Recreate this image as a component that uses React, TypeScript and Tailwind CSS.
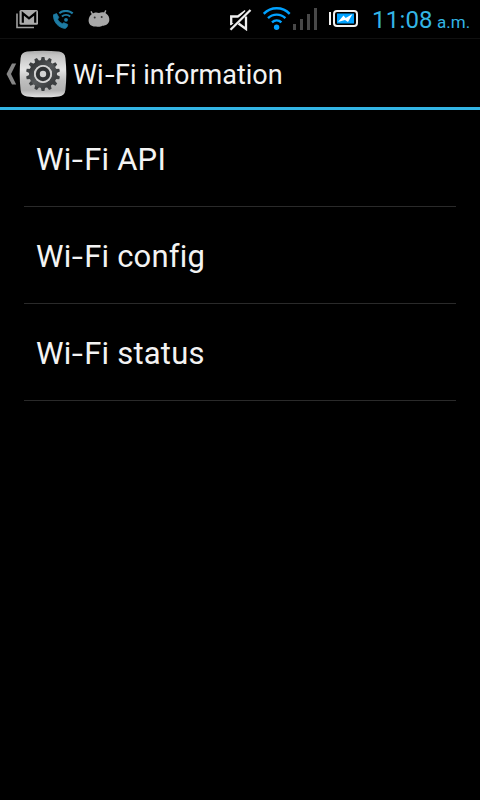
const entries = ["Wi-Fi API", "Wi-Fi config", "Wi-Fi status"];

const teeth = Array.from({ length: 14 }, (_, i) => (i * 360) / 14);

function MailIcon() {
  return (
    <svg width="22" height="19" viewBox="0 0 22 19" className="shrink-0">
      <path d="M1 3.5V17.5H18" fill="none" stroke="#a0a0a0" strokeWidth="1.6" />
      <rect x="3.5" y="0" width="18.5" height="14.8" rx="1.5" fill="#ababab" />
      <path d="M6.8 12.8V3.4L13 8.4l6.2-5v9.4" fill="none" stroke="#000" strokeWidth="2.2" />
    </svg>
  );
}

function WifiCallIcon() {
  return (
    <svg width="21" height="19" viewBox="0 0 21 19" className="ml-px shrink-0">
      <path
        d="M.4 4.8 3.6 3.6 5.8 7.4 4.6 9.2c1.1 2.1 2.6 3.5 4.8 4.5l1.4-1 3.9 1.7c0 1.7-.8 3.1-2.5 4C5.8 18 .2 12.2.4 4.8z"
        fill="#1d7ba3"
        stroke="#1d7ba3"
        strokeWidth=".8"
        strokeLinejoin="round"
      />
      <path d="M6.3 3.2C10 .1 16 .1 19.7 3.4M8.9 6.5c2.4-2 5.9-2 8.3 0" fill="none" stroke="#1d7ba3" strokeWidth="2.1" />
      <circle cx="13" cy="9.8" r="1.9" fill="#1d7ba3" />
    </svg>
  );
}

function AndroidIcon() {
  return (
    <svg width="22" height="18" viewBox="0 0 22 18" className="shrink-0">
      <path d="M3.3 1.8 5 5M17.6.9 16 4.5" stroke="#a5a5a5" strokeWidth="1.4" strokeLinecap="round" />
      <path
        d="M3.6 4.2C6 2.3 8.7 2.1 11 3c2.5-1 5.3-.9 7.3.8 2.2 1.5 3.2 3.8 3 6.4-.3 3.5-3.2 5.4-7 5.5-1.6 1.2-4.1 1.5-6.3.7C3.6 16.8.6 14.4.6 10.4c0-2.5 1-4.7 3-6.2z"
        fill="#a8a8a8"
      />
      <circle cx="6.7" cy="7.6" r="1" fill="#333" />
      <circle cx="13.7" cy="7" r="1" fill="#333" />
    </svg>
  );
}

function MutedIcon() {
  return (
    <svg width="23" height="22" viewBox="0 0 23 22" className="shrink-0">
      <path d="M9.5 7.5H2.2v7.7h3.3M8.5 7.8l8-5.8M17 7.5V20l-7.5-5.5" fill="none" stroke="#eee" strokeWidth="2.3" />
      <path d="M1 19 20 0" stroke="#000" strokeWidth="2" />
      <path d="M1.5 20.8 21.5 1" stroke="#eee" strokeWidth="2.3" />
    </svg>
  );
}

function WifiIcon() {
  return (
    <svg width="28" height="24" viewBox="0 0 28 24" className="shrink-0">
      <g fill="none" stroke="#00a2ff" strokeWidth="2.4">
        <path d="M.7 6.8C7.9-.6 19.5-.6 26.7 6.8" />
        <path d="M5 11.2c4.9-4.8 12.5-4.8 17.4 0" />
        <path d="M9 15.4c2.7-2.5 6.7-2.5 9.4 0" />
      </g>
      <circle cx="13.6" cy="20.3" r="2.7" fill="#00a2ff" />
    </svg>
  );
}

function SignalIcon() {
  return (
    <svg width="24" height="22" viewBox="0 0 24 22" className="shrink-0" fill="#484848">
      <rect x="0" y="16" width="3" height="6" />
      <rect x="7" y="11" width="3" height="11" />
      <rect x="14" y="6" width="3" height="16" />
      <rect x="21" y="0" width="3" height="22" />
    </svg>
  );
}

function BatteryIcon() {
  return (
    <svg width="29" height="18" viewBox="0 0 29 18" className="shrink-0">
      <rect x="0" y="2" width="2" height="13" fill="#f2f2f2" />
      <rect x="5" y="1" width="23" height="15" rx="3" fill="#000" stroke="#f2f2f2" strokeWidth="2" />
      <rect x="8" y="3.5" width="17" height="10" fill="#00a2ff" />
      <path d="M9 12 14.5 5.500l2.200 2.500L23.500 4 19 12l-3-2z" fill="#fff" />
    </svg>
  );
}

function SettingsIcon() {
  return (
    <svg width="48" height="48" viewBox="0 0 48 48" className="mt-[2px] shrink-0">
      <defs>
        <linearGradient id="tile" x1="0" y1="0" x2="0" y2="1">
          <stop offset="0" stopColor="#aaa" />
          <stop offset=".1" stopColor="#c4c4c4" />
          <stop offset=".4" stopColor="#e4e4e4" />
          <stop offset=".65" stopColor="#bdbdbd" />
          <stop offset=".85" stopColor="#b2b2b2" />
          <stop offset="1" stopColor="#e2e2e2" />
        </linearGradient>
        <linearGradient id="gear" x1="0" y1="0" x2="1" y2="1">
          <stop offset="0" stopColor="#303234" />
          <stop offset=".5" stopColor="#55585a" />
          <stop offset="1" stopColor="#343638" />
        </linearGradient>
      </defs>
      <path
        d="M8 1.6Q24-.2 40 1.6 45.8 2.2 46.4 8 48.2 24 46.4 40 45.8 45.8 40 46.4 24 48.2 8 46.4 2.2 45.8 1.6 40-.2 24 1.6 8 2.2 2.2 8 1.6z"
        fill="url(#tile)"
      />
      <g fill="#3d4042">
        {teeth.map((angle) => (
          <path key={angle} d="M21.5 12 22.6 7h2.8l1.1 5z" transform={`rotate(${angle} 24 24)`} />
        ))}
      </g>
      <circle cx="24" cy="24" r="11.5" fill="none" stroke="url(#gear)" strokeWidth="5" />
      <circle cx="24" cy="24" r="9" fill="#d2d2d2" />
      <circle cx="24" cy="24" r="5.2" fill="none" stroke="#303234" strokeWidth="4" />
    </svg>
  );
}

function StatusBar() {
  return (
    <div className="flex h-[39px] items-start border-b border-[#101010]">
      <div className="flex gap-[14px] pt-[10px] pl-4">
        <MailIcon />
        <WifiCallIcon />
        <AndroidIcon />
      </div>
      <div className="ml-auto flex h-[38px] items-start">
        <div className="pt-[9px]"><MutedIcon /></div>
        <div className="pt-[7px] pl-[11px]"><WifiIcon /></div>
        <div className="pt-[8px] pl-[2px]"><SignalIcon /></div>
        <div className="pt-[10px] pl-[12px]"><BatteryIcon /></div>
        <div className="ml-[14px] flex w-[108px] items-baseline text-[#33b5e5]">
          <span className="w-[65px] text-[24px] leading-[40px] tracking-[0.2px]">11:08</span>
          <span className="text-[17px]">a.m.</span>
        </div>
      </div>
    </div>
  );
}

function WideHyphenText({ text }: { text: string }) {
  const [before, after] = text.split("-");
  return (
    <span>
      {before}
      <span className="mx-[2px] inline-block scale-x-[1.3]">-</span>
      {after}
    </span>
  );
}

export default function App() {
  return (
    <div className="h-[800px] w-[480px] overflow-hidden bg-black font-[Roboto,sans-serif] text-[#f3f3f3]">
      <StatusBar />
      <header className="flex h-[71px] items-center border-b-[3px] border-[#33b5e5] pl-[6px]">
        <svg width="11" height="22" viewBox="0 0 11 22" className="mt-[2px] mr-[2px] shrink-0">
          <path d="M6 .5h4.2L5 11l5.2 10.5H6L.5 11z" fill="#858585" />
        </svg>
        <SettingsIcon />
        <h1 className="mt-[5px] ml-[6px] text-[27px] leading-none whitespace-nowrap">
          <WideHyphenText text="Wi-Fi information" />
        </h1>
      </header>
      <ul className="px-6">
        {entries.map((entry) => (
          <li
            key={entry}
            className="flex h-[97px] items-center border-b border-[#2a2a2a] pt-1 pl-3 text-[31px] tracking-[0.2px] whitespace-nowrap"
          >
            <WideHyphenText text={entry} />
          </li>
        ))}
      </ul>
    </div>
  );
}
